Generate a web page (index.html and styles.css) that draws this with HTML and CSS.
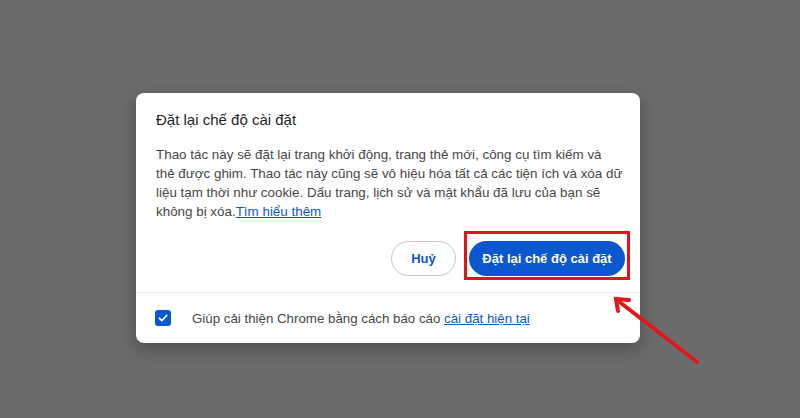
FILE: index.html
```html
<!DOCTYPE html>
<html lang="vi">
<head>
<meta charset="utf-8">
<title>Đặt lại chế độ cài đặt</title>
<link rel="stylesheet" href="styles.css">
</head>
<body>
<div class="dialog">
  <div class="main">
    <h1 class="title">Đặt lại chế độ cài đặt</h1>
    <p class="body">Thao tác này sẽ đặt lại trang khởi động, trang thẻ mới, công cụ tìm kiếm và<br>thẻ được ghim. Thao tác này cũng sẽ vô hiệu hóa tất cả các tiện ích và xóa dữ<br>liệu tạm thời như cookie. Dấu trang, lịch sử và mật khẩu đã lưu của bạn sẽ<br>không bị xóa.<a class="link" href="#">Tìm hiểu thêm</a></p>
    <div class="actions">
      <button class="btn btn-outline">Huỷ</button>
      <div class="highlight-wrap">
        <button class="btn btn-primary">Đặt lại chế độ cài đặt</button>
        <span class="highlight"></span>
      </div>
    </div>
  </div>
  <div class="footer">
    <span class="checkbox">
      <svg width="12" height="12" viewBox="0 0 12 12"><path d="M2.3 6.2 L4.8 8.6 L9.8 3.4" fill="none" stroke="#fff" stroke-width="1.6" stroke-linecap="round" stroke-linejoin="round"/></svg>
    </span>
    <span class="footer-text">Giúp cải thiện Chrome bằng cách báo cáo <a class="link" href="#">cài đặt hiện tại</a></span>
  </div>
</div>
<svg class="arrow" width="800" height="418" viewBox="0 0 800 418">
  <g stroke="#e3161c" stroke-width="4" stroke-linecap="round" fill="none">
    <line x1="697" y1="362" x2="617" y2="300"/>
    <path d="M629 300 L616 299 L618 311" stroke-linejoin="miter"/>
  </g>
</svg>
</body>
</html>
```
FILE: styles.css
```css
html, body {
  margin: 0;
  padding: 0;
}
body {
  width: 800px;
  height: 418px;
  background: #6b6b6b;
  font-family: "Liberation Sans", Arial, sans-serif;
  overflow: hidden;
  position: relative;
}
.dialog {
  margin: 93px 0 0 136px;
  width: 504px;
  height: 250px;
  background: #ffffff;
  border-radius: 8px;
  box-shadow: 0 6px 18px rgba(0, 0, 0, 0.28);
  display: flex;
  flex-direction: column;
  box-sizing: border-box;
}
.main {
  padding: 17px 15px 16px 20px;
  border-bottom: 1px solid #e6e6e6;
}
.title {
  margin: 0;
  font-size: 15px;
  line-height: 20px;
  font-weight: 400;
  color: #1f1f1f;
}
.body {
  margin: 15px 0 0 0;
  font-size: 13.4px;
  line-height: 19px;
  color: #474747;
  white-space: nowrap;
}
.link {
  color: #0b57d0;
  text-decoration: underline;
}
.actions {
  display: flex;
  justify-content: flex-end;
  align-items: center;
  gap: 13px;
  margin-top: 20px;
}
.btn {
  font-family: inherit;
  font-size: 13px;
  font-weight: 700;
  height: 35px;
  border-radius: 18px;
  padding: 0;
  white-space: nowrap;
  cursor: pointer;
}
.btn-outline {
  width: 65px;
  background: #fff;
  color: #0b57d0;
  border: 1px solid #c7c7c7;
}
.btn-primary {
  width: 156px;
  background: #0b57d0;
  color: #fff;
  border: none;
  display: block;
}
.highlight-wrap {
  position: relative;
}
.highlight {
  position: absolute;
  left: -5px;
  right: -5px;
  top: -10px;
  bottom: -4px;
  border: 3px solid #e0141b;
  pointer-events: none;
}
.footer {
  flex: 1;
  display: flex;
  align-items: center;
  padding-left: 19px;
  gap: 21px;
}
.checkbox {
  width: 16px;
  height: 16px;
  border-radius: 3px;
  background: #0b57d0;
  display: flex;
  align-items: center;
  justify-content: center;
}
.footer-text {
  font-size: 13.3px;
  color: #474747;
}
.arrow {
  position: absolute;
  left: 0;
  top: 0;
  pointer-events: none;
}
```
